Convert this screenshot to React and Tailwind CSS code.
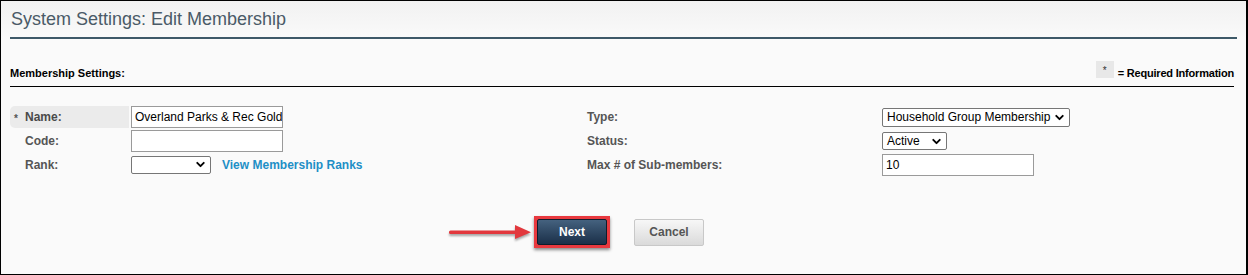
import { ChevronDown } from 'lucide-react';

function FakeSelect({ value, width, height }) {
  return (
    <div
      className={`flex items-center justify-between bg-white border border-[#767676] rounded-[2px] pl-[4px] pr-[3px] text-[12px] text-black ${width} ${height}`}
    >
      <span className="leading-none whitespace-nowrap">{value}</span>
      <ChevronDown size={13} strokeWidth={3.5} className="text-black shrink-0" />
    </div>
  );
}

function TextBox({ value, width }) {
  return (
    <div className={`h-[22px] ${width} bg-white border border-[#9a9a9a] flex items-center px-[3px] text-[12px] text-black whitespace-nowrap overflow-hidden`}>
      {value}
    </div>
  );
}

function Label({ children, required }) {
  if (required) {
    return (
      <div className="w-[119px] h-[22px] bg-[#ebebeb] rounded-l-[5px] flex items-center text-[12px] font-bold text-[#4a4a4a]">
        <span className="w-[15px] pl-[4px] pt-[3px] text-[10px] text-[#555]">*</span>
        <span>{children}</span>
      </div>
    );
  }
  return (
    <div className="w-[119px] pl-[15px] text-[12px] font-bold text-[#555]">{children}</div>
  );
}

export default function App() {
  return (
    <div className="w-[1248px] h-[275px] border border-black border-r-2 bg-[#fafafa] font-['Liberation_Sans',Arial,sans-serif] flex flex-col">
      <div className="bg-gradient-to-b from-[#f1f1f1] to-[#fafafa]">
        <h1 className="mx-[9px] pl-[1px] pt-[3px] pb-[3px] leading-[30px] text-[18px] text-[#4a5a67] border-b-2 border-[#3e5968]">
          System Settings: Edit Membership
        </h1>
      </div>

      <div className="mt-[22px] ml-[9px] mr-[12px] flex items-end justify-between pb-[6px] border-b border-black">
        <span className="text-[11px] leading-[14px] font-bold text-black">Membership Settings:</span>
        <div className="flex items-end gap-[4px]">
          <span className="w-[18px] h-[17px] mb-[2px] bg-[#e8e8e8] flex justify-center pt-[5px] text-[10px] leading-none text-[#333]">*</span>
          <span className="text-[11px] leading-[14px] font-bold tracking-[-0.2px] text-black">= Required Information</span>
        </div>
      </div>

      <div className="mt-[18px] ml-[9px] flex flex-col">
        <div className="h-[24px] flex items-center">
          <div className="w-[577px] flex items-center gap-[2px]">
            <Label required>Name:</Label>
            <TextBox value="Overland Parks & Rec Gold" width="w-[152px]" />
          </div>
          <div className="w-[295px] text-[12px] font-bold text-[#555]">Type:</div>
          <FakeSelect value="Household Group Membership" width="w-[188px]" height="h-[19px]" />
        </div>
        <div className="h-[24px] flex items-center">
          <div className="w-[577px] flex items-center gap-[2px]">
            <Label>Code:</Label>
            <TextBox value="" width="w-[152px]" />
          </div>
          <div className="w-[295px] text-[12px] font-bold text-[#555]">Status:</div>
          <FakeSelect value="Active" width="w-[65px]" height="h-[18px]" />
        </div>
        <div className="h-[23px] flex items-center">
          <div className="w-[577px] flex items-center gap-[2px]">
            <Label>Rank:</Label>
            <FakeSelect value="" width="w-[80px]" height="h-[18px]" />
            <a href="#" className="ml-[9px] text-[12px] font-bold text-[#1e8fc6]">View Membership Ranks</a>
          </div>
          <div className="w-[295px] text-[12px] font-bold text-[#555]">Max # of Sub-members:</div>
          <TextBox value="10" width="w-[152px]" />
        </div>
      </div>

      <div className="mt-[40px] pl-[448px] flex items-center">
        <svg width="85" height="18" viewBox="0 0 85 18" className="drop-shadow-[0_2px_1px_rgba(0,0,0,0.35)]">
          <rect x="0" y="7.5" width="70" height="3.5" rx="1.5" fill="#e2383d" />
          <path d="M66 2 L82 9.2 L66 16 Z" fill="#e2383d" />
        </svg>
        <div className="p-[3px] bg-[#e8393f] shadow-[0_2px_3px_rgba(0,0,0,0.45)]">
          <button
            type="button"
            className="w-[70px] h-[26px] rounded-[2px] border border-[#0e1d2c] bg-gradient-to-b from-[#45627f] to-[#1b3049] text-white text-[12px] font-bold"
          >
            Next
          </button>
        </div>
        <button
          type="button"
          className="ml-[24px] w-[70px] h-[27px] rounded-[2px] border border-[#c8c8c8] bg-gradient-to-b from-[#f7f7f7] to-[#dadada] text-[#555] text-[12px] font-bold"
        >
          Cancel
        </button>
      </div>
    </div>
  );
}
